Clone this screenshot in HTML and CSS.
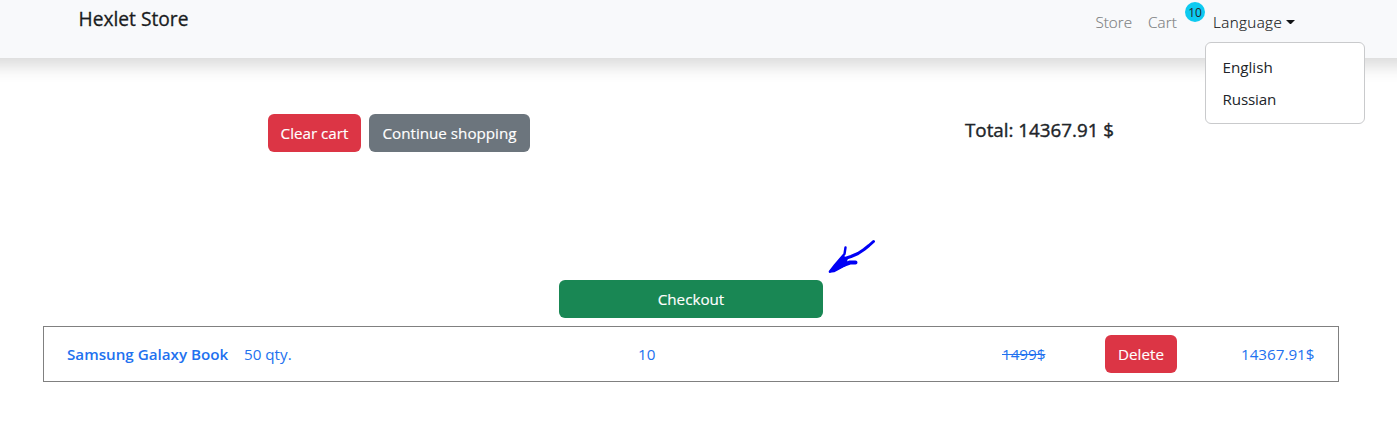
FILE: index.html
```html
<!DOCTYPE html>
<html lang="en">
<head>
<meta charset="utf-8">
<title>Hexlet Store</title>
<link rel="stylesheet" href="styles.css">
</head>
<body>
<header class="navbar">
  <a class="brand">Hexlet Store</a>
  <nav class="nav">
    <a class="nav-link store">Store</a>
    <a class="nav-link cart">Cart</a>
    <span class="badge">10</span>
    <div class="dropdown">
      <a class="nav-link language">Language</a><i class="caret"></i>
      <div class="menu">
        <a class="menu-item english">English</a>
        <a class="menu-item russian">Russian</a>
      </div>
    </div>
  </nav>
</header>
<main>
  <section class="summary">
    <div class="actions">
      <button class="btn danger clear"><span>Clear cart</span></button>
      <button class="btn secondary"><span>Continue shopping</span></button>
    </div>
    <h5 class="total">Total: 14367.91 $</h5>
  </section>
  <div class="checkout">
    <button class="btn success"><span>Checkout</span></button>
    <svg class="arrow" width="52" height="38" viewBox="0 0 52 38" fill="none" stroke="#0000f5" stroke-linecap="round" stroke-linejoin="round">
      <path stroke-width="3" d="M48.500 5.500L44 9.500L39 13.500L33 17.500L26 20.500L20 22.500L11 31"/>
      <path stroke-width="2.400" d="M20.500 11.500L19.500 18L16 22L10 29L5 35.500L13 32"/>
      <path stroke-width="4" d="M30.500 26.500L25 26.500L18 29L10 33"/>
      <path fill="#0000f5" stroke-width="1.500" d="M18 20L9 31L4.500 36L9 35.500L20 29.500L22 23Z"/>
    </svg>
  </div>
  <article class="item">
    <a class="name">Samsung Galaxy Book</a>
    <span class="stock">50 qty.</span>
    <span class="count">10</span>
    <s class="price">1499$</s>
    <button class="btn danger delete"><span>Delete</span></button>
    <span class="sum">14367.91$</span>
  </article>
</main>
</body>
</html>
```
FILE: styles.css
```css
* { box-sizing: border-box; }
body { margin: 0; overflow-x: hidden; background: #fff; color: #212529; font: 15.2px/24px "Open Sans", "Noto Sans", sans-serif; white-space: nowrap; }
.navbar { position: relative; z-index: 1; display: flex; justify-content: space-between; height: 58px; margin: 0 -24px; padding: 0 126px 0 102.500px; background: #f8f9fb; box-shadow: 0 8px 16px rgba(0,0,0,.15); }
.brand { font-size: 19.2px; line-height: 30px; padding-top: 4px; color: #1a1c1e; -webkit-text-stroke: .3px; }
.nav { display: flex; padding-top: 10px; }
.nav-link { color: #7c7e80; font-weight: 300; -webkit-text-stroke: .15px; }
.store { width: 53px; text-indent: .5px; }
.cart { width: 37px; letter-spacing: .15px; }
.badge { width: 20px; height: 20px; margin: -8px 8px 0 0; border-radius: 50%; background: #0dcaf0; font-size: 12px; line-height: 21px; text-align: center; }
.dropdown { position: relative; display: flex; width: 82px; }
.language { width: 73.500px; color: #121416; letter-spacing: .4px; }
.caret { width: 9px; height: 5px; margin-top: 10px; border: 4.500px solid transparent; border-top-color: #121416; border-bottom: 0; }
.menu { position: absolute; top: 32px; left: -8px; width: 160px; height: 82px; padding: 8px 0; border: 1px solid #c9cacc; border-radius: 6px; background: #fff; }
.menu-item { display: block; padding: 4px 16.500px; font-weight: 400; }
.russian { letter-spacing: -.15px; }
.summary { display: flex; justify-content: space-between; height: 222px; padding: 56px 284px 0 268px; }
.actions { display: flex; gap: 8px; }
.btn { height: 38px; padding: 0; border: 0; border-radius: 6px; color: #fff; font: inherit; text-align: center; -webkit-text-stroke: .15px; }
.danger { background: #dc3545; }
.secondary { width: 161px; background: #6c757d; }
.success { width: 264px; background: #198754; }
.clear { width: 93px; }
.total { margin: 4px 0 0; width: 148px; font-size: 18.800px; font-weight: 400; -webkit-text-stroke: .4px; }
.checkout { position: relative; height: 46px; padding-left: 559px; }
.arrow { position: absolute; left: 825px; top: -44px; }
.item { display: grid; grid-template-columns: 177px 394px 364px 103px 136px 73px; align-items: center; width: 1296px; height: 56px; margin-left: 43px; padding-left: 23px; border: 1px solid #808080; color: #2271ef; }
.name { font-weight: 600; }
.delete { width: 72px; }
```
